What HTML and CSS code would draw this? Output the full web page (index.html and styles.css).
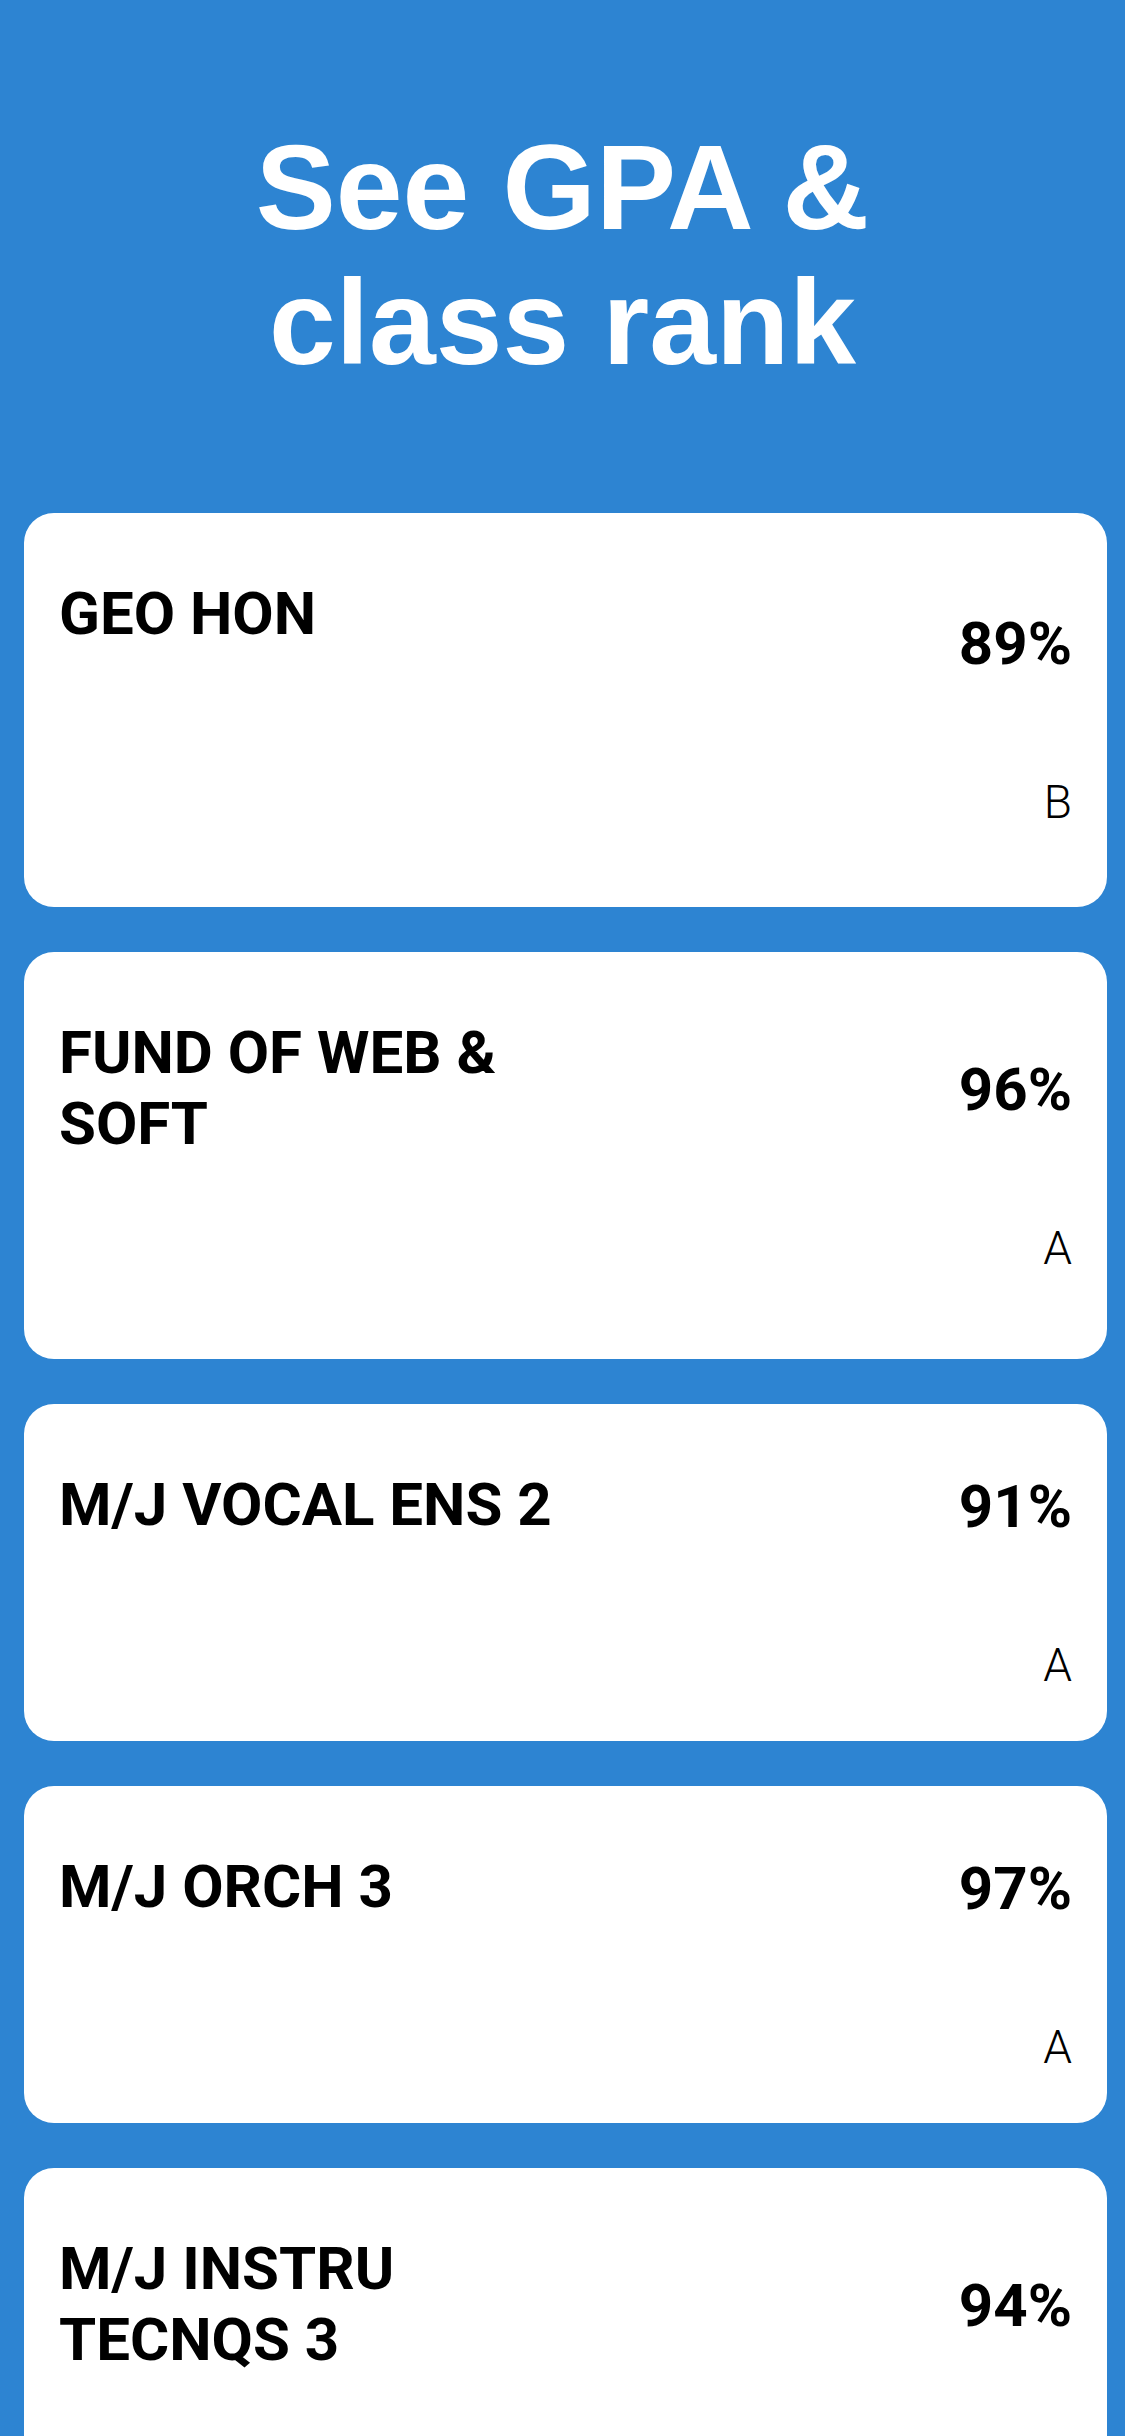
FILE: index.html
```html
<!DOCTYPE html>
<html lang="en">
<head>
<meta charset="utf-8">
<title>See GPA &amp; class rank</title>
<link rel="stylesheet" href="styles.css">
</head>
<body>
<div class="page">
  <h1 class="headline">See GPA &amp;<br>class rank</h1>
  <div class="list">
    <div class="card card--mid">
      <div class="name">GEO HON</div>
      <div class="score">
        <div class="pct">89%</div>
        <div class="grade">B</div>
      </div>
    </div>
    <div class="card card--tall">
      <div class="name">FUND OF WEB &amp; SOFT</div>
      <div class="score">
        <div class="pct">96%</div>
        <div class="grade">A</div>
      </div>
    </div>
    <div class="card">
      <div class="name">M/J VOCAL ENS 2</div>
      <div class="score">
        <div class="pct">91%</div>
        <div class="grade">A</div>
      </div>
    </div>
    <div class="card">
      <div class="name">M/J ORCH 3</div>
      <div class="score">
        <div class="pct">97%</div>
        <div class="grade">A</div>
      </div>
    </div>
    <div class="card card--tall">
      <div class="name">M/J INSTRU TECNQS 3</div>
      <div class="score">
        <div class="pct">94%</div>
        <div class="grade">A</div>
      </div>
    </div>
  </div>
</div>
</body>
</html>
```
FILE: styles.css
```css
html, body {
  margin: 0;
  padding: 0;
  background: #2d84d2;
}
.page {
  width: 1125px;
  min-height: 2436px;
  overflow: hidden;
}
.headline {
  margin: 120px 0 0 0;
  font-family: "Liberation Sans", Arial, sans-serif;
  font-weight: 700;
  font-size: 120px;
  line-height: 135px;
  color: #ffffff;
  text-align: center;
}
.list {
  display: flex;
  flex-direction: column;
  gap: 45px;
  margin: 123px 18px 0 24px;
}
.card {
  box-sizing: border-box;
  height: 337px;
  background: #ffffff;
  border-radius: 30px;
  padding: 65px 35px 48px 35px;
  display: flex;
  justify-content: space-between;
  font-family: Roboto, "Noto Sans", sans-serif;
  color: #000000;
}
.card--mid { height: 394px; }
.card--tall { height: 407px; }
.name {
  align-self: flex-start;
  max-width: 550px;
  font-size: 60px;
  font-weight: 700;
  line-height: 71px;
}
.score {
  align-self: center;
  display: flex;
  flex-direction: column;
  align-items: flex-end;
  gap: 96px;
}
.pct {
  font-size: 60px;
  font-weight: 700;
  line-height: 71px;
}
.grade {
  font-size: 46px;
  font-weight: 300;
  line-height: 54px;
}
```
